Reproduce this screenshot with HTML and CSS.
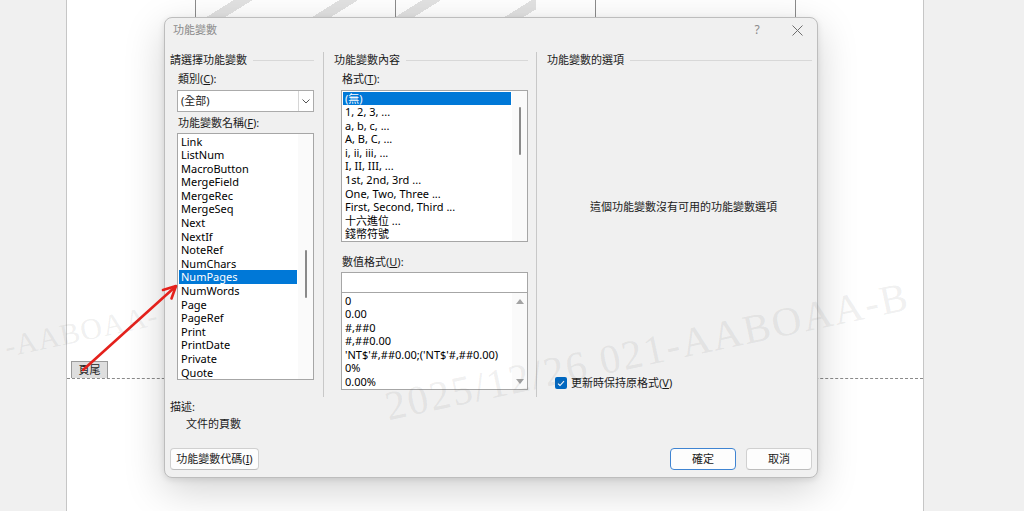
FILE: index.html
```html
<!DOCTYPE html>
<html lang="zh-Hant">
<head>
<meta charset="utf-8">
<title>功能變數</title>
<link rel="stylesheet" href="styles.css">
</head>
<body>
<div class="desk">
  <div class="gutter"></div>
  <div class="page">
    <div class="hdr-table">
      <div class="cell stripes"></div>
      <div class="cell stripes stripes-b"></div>
      <div class="cell"></div>
    </div>
    <div class="footer-zone">
      <span class="footer-tag">頁尾</span>
    </div>
  </div>
  <div class="gutter gutter-r"></div>
</div>

<div class="dialog">
  <div class="titlebar">
    <span class="title">功能變數</span>
    <span class="tb-btn help">?</span>
    <span class="tb-btn close">
      <svg width="11" height="11" viewBox="0 0 11 11"><path d="M0.5 0.5 L10.5 10.5 M10.5 0.5 L0.5 10.5" stroke="#6e6e6e" stroke-width="1" fill="none"/></svg>
    </span>
  </div>

  <div class="main">
    <div class="col col1">
      <div class="group-title">請選擇功能變數</div>
      <div class="label">類別(<u>C</u>):</div>
      <div class="combo">
        <span class="combo-text">(全部)</span>
        <span class="combo-btn">
          <svg width="8" height="5" viewBox="0 0 8 5"><path d="M0.5 0.5 L4 4 L7.5 0.5" stroke="#555" stroke-width="1" fill="none"/></svg>
        </span>
      </div>
      <div class="label label-names">功能變數名稱(<u>F</u>):</div>
      <div class="listbox names">
        <div class="items">
          <div class="item">Link</div>
          <div class="item">ListNum</div>
          <div class="item">MacroButton</div>
          <div class="item">MergeField</div>
          <div class="item">MergeRec</div>
          <div class="item">MergeSeq</div>
          <div class="item">Next</div>
          <div class="item">NextIf</div>
          <div class="item">NoteRef</div>
          <div class="item">NumChars</div>
          <div class="item sel">NumPages</div>
          <div class="item">NumWords</div>
          <div class="item">Page</div>
          <div class="item">PageRef</div>
          <div class="item">Print</div>
          <div class="item">PrintDate</div>
          <div class="item">Private</div>
          <div class="item">Quote</div>
        </div>
        <div class="vscroll"><div class="thumb thumb-names"></div></div>
      </div>
    </div>
    <div class="sep"></div>
    <div class="col col2">
      <div class="group-title">功能變數內容</div>
      <div class="label">格式(<u>T</u>):</div>
      <div class="listbox formats">
        <div class="items">
          <div class="item sel">(無)</div>
          <div class="item">1, 2, 3, ...</div>
          <div class="item">a, b, c, ...</div>
          <div class="item">A, B, C, ...</div>
          <div class="item">i, ii, iii, ...</div>
          <div class="item">I, II, III, ...</div>
          <div class="item">1st, 2nd, 3rd ...</div>
          <div class="item">One, Two, Three ...</div>
          <div class="item">First, Second, Third ...</div>
          <div class="item">十六進位 ...</div>
          <div class="item">錢幣符號</div>
        </div>
        <div class="vscroll"><div class="thumb thumb-formats"></div></div>
      </div>
      <div class="label label-num">數值格式(<u>U</u>):</div>
      <div class="textbox"></div>
      <div class="listbox numbers">
        <div class="items">
          <div class="item">0</div>
          <div class="item">0.00</div>
          <div class="item">#,##0</div>
          <div class="item">#,##0.00</div>
          <div class="item">'NT$'#,##0.00;('NT$'#,##0.00)</div>
          <div class="item">0%</div>
          <div class="item">0.00%</div>
        </div>
        <div class="vscroll arrows">
          <span class="arr up"></span>
          <span class="arr down"></span>
        </div>
      </div>
    </div>
    <div class="sep"></div>
    <div class="col col3">
      <div class="group-title">功能變數的選項</div>
      <div class="no-options">這個功能變數沒有可用的功能變數選項</div>
      <div class="check-row">
        <span class="checkbox">
          <svg width="8" height="7" viewBox="0 0 8 7"><path d="M1 3.6 L3 5.5 L7 1.2" stroke="#fff" stroke-width="1.1" fill="none"/></svg>
        </span>
        <span>更新時保持原格式(<u>V</u>)</span>
      </div>
    </div>
  </div>

  <div class="bottom">
    <div class="desc-label">描述:</div>
    <div class="desc-text">文件的頁數</div>
    <div class="buttons">
      <span class="btn btn-codes">功能變數代碼(<u>I</u>)</span>
      <span class="btn btn-ok">確定</span>
      <span class="btn btn-cancel">取消</span>
    </div>
  </div>
</div>

<svg class="arrow" width="1024" height="511" viewBox="0 0 1024 511">
  <g stroke="#e4211c" stroke-width="2.6" stroke-linecap="round" stroke-linejoin="round" fill="none">
    <path d="M83 370 L175 287"/>
    <path d="M163 290 L176 286 L171.5 298.5"/>
  </g>
</svg>

<div class="watermark wm1">2025/12/26 021-AABOAA-B</div>
<div class="watermark wm2">-AABOAA-</div>
</body>
</html>
```

FILE: styles.css
```css
html, body {
  margin: 0;
  padding: 0;
}
body {
  width: 1024px;
  height: 511px;
  overflow: hidden;
  position: relative;
  background: #f0f0f0;
  font-family: "Noto Sans", "Noto Sans CJK TC", sans-serif;
}

/* ---------- document background ---------- */
.desk {
  display: flex;
  height: 511px;
}
.gutter {
  width: 66px;
  background: #f0f0f0;
}
.gutter-r {
  width: 100px;
}
.page {
  flex: 1;
  background: #fff;
  border-left: 1px solid #c6c6c6;
  border-right: 1px solid #c6c6c6;
  display: flex;
  flex-direction: column;
}
.hdr-table {
  display: flex;
  margin-left: 128px;
  height: 40px;
}
.cell {
  width: 199px;
  border-left: 1px solid #8c8c8c;
}
.cell:last-child {
  border-right: 1px solid #8c8c8c;
}
.stripes {
  background: repeating-linear-gradient(148deg, transparent 0 20px, #e2e2e2 20px 30px, transparent 30px 56px);
}
.stripes-b {
  background: linear-gradient(90deg, transparent 0 140px, #fff 140px),
              repeating-linear-gradient(148deg, transparent 0 14px, #e2e2e2 14px 24px, transparent 24px 58px);
}
.footer-zone {
  margin-top: 321px;
  height: 17px;
  border-bottom: 1px dashed #8a8a8a;
  display: flex;
  align-items: flex-end;
}
.footer-tag {
  margin-left: 4px;
  width: 37px;
  height: 17px;
  box-sizing: border-box;
  border: 1px solid #9a9a9a;
  border-bottom: none;
  background: #dedede;
  font-size: 11px;
  line-height: 16px;
  text-align: center;
  color: #222;
}

/* ---------- dialog ---------- */
.dialog {
  position: absolute;
  left: 164px;
  top: 17px;
  width: 654px;
  height: 461px;
  box-sizing: border-box;
  background: #f0f0f0;
  border: 1px solid #bdbdbd;
  border-radius: 8px;
  box-shadow: 0 12px 40px rgba(0, 0, 0, 0.18), 0 2px 6px rgba(0, 0, 0, 0.10);
  font-size: 11px;
  line-height: 14px;
  color: #1a1a1a;
  display: flex;
  flex-direction: column;
}
.dialog u {
  text-decoration-thickness: 1px;
  text-underline-offset: 1px;
}
.titlebar {
  height: 24px;
  display: flex;
  align-items: center;
  padding-left: 8px;
}
.title {
  color: #8a8a8a;
  font-size: 11px;
}
.tb-btn {
  width: 40px;
  height: 24px;
  display: flex;
  align-items: center;
  justify-content: center;
  color: #8a8a8a;
}
.help {
  margin-left: auto;
  font-size: 12px;
}

.main {
  display: flex;
  height: 345px;
  margin-top: 10px;
}
.col {
  box-sizing: border-box;
  display: flex;
  flex-direction: column;
}
.col1 {
  width: 158px;
  padding: 0 9px 0 5px;
}
.col2 {
  width: 212px;
  padding: 0 8px 0 10px;
}
.col3 {
  flex: 1;
  padding: 0 5px 0 10px;
}
.sep {
  width: 1px;
  background: #c8c8c8;
}
.group-title {
  display: flex;
  align-items: center;
  gap: 6px;
  height: 14px;
  margin-top: 1px;
  white-space: nowrap;
}
.group-title::after {
  content: "";
  flex: 1;
  border-top: 1px solid #d8d8d8;
}
.label {
  margin: 5px 0 0 8px;
  height: 14px;
}
.label-names {
  margin-top: 4px;
}
.combo {
  margin: 4px 0 0 7px;
  height: 22px;
  box-sizing: border-box;
  border: 1px solid #ababab;
  background: #fff;
  display: flex;
  align-items: center;
}
.combo-text {
  padding-left: 3px;
}
.combo-btn {
  margin-left: auto;
  width: 14px;
  height: 100%;
  border-left: 1px solid #d6d6d6;
  display: flex;
  align-items: center;
  justify-content: center;
}

.listbox {
  margin-left: 7px;
  box-sizing: border-box;
  border: 1px solid #a6a6a6;
  background: #fff;
  display: flex;
  color: #000;
}
.listbox.names {
  margin-top: 3px;
  height: 247px;
}
.listbox.formats {
  margin-top: 4px;
  height: 152px;
}
.listbox.numbers {
  margin-top: -1px;
  height: 98px;
}
.items {
  flex: 1;
  min-width: 0;
  padding-top: 0.5px;
  overflow: hidden;
}
.item {
  height: 13.6px;
  line-height: 13.6px;
  margin: 0 1px;
  padding-left: 2px;
  white-space: nowrap;
}
.item.sel {
  background: #0078d7;
  color: #fff;
}
.vscroll {
  width: 15px;
  background: #fafafa;
  display: flex;
  flex-direction: column;
  align-items: center;
}
.thumb {
  width: 2px;
  background: #8a8a8a;
  border-radius: 1px;
}
.thumb-names {
  margin-top: 116px;
  height: 48px;
}
.thumb-formats {
  margin-top: 16px;
  height: 48px;
}
.arrows {
  justify-content: space-between;
  padding: 6px 0 5px;
  box-sizing: border-box;
}
.arr {
  width: 0;
  height: 0;
  border-left: 4px solid transparent;
  border-right: 4px solid transparent;
}
.arr.up {
  border-bottom: 5px solid #a3a3a3;
}
.arr.down {
  border-top: 5px solid #a3a3a3;
}
.label-num {
  margin-top: 13px;
}
.textbox {
  margin: 3px 0 0 7px;
  height: 21px;
  box-sizing: border-box;
  border: 1px solid #a6a6a6;
  background: #fff;
}

.no-options {
  margin-top: 133px;
  text-align: center;
  padding-left: 8px;
}
.check-row {
  margin-top: 162px;
  padding-left: 8px;
  display: flex;
  align-items: center;
  gap: 4px;
  height: 14px;
}
.checkbox {
  width: 12px;
  height: 12px;
  box-sizing: border-box;
  border-radius: 2px;
  background: #0067c0;
  display: flex;
  align-items: center;
  justify-content: center;
}

.bottom {
  padding: 0 5px;
  display: flex;
  flex-direction: column;
}
.desc-label {
  margin-top: 3px;
  height: 14px;
}
.desc-text {
  margin: 3px 0 0 16px;
  height: 14px;
}
.buttons {
  margin-top: 17px;
  display: flex;
  gap: 10px;
}
.btn {
  height: 22px;
  box-sizing: border-box;
  border: 1px solid #d0d0d0;
  border-bottom-color: #bdbdbd;
  border-radius: 4px;
  background: #fdfdfd;
  display: flex;
  align-items: center;
  justify-content: center;
}
.btn-codes {
  width: 89px;
}
.btn-ok {
  margin-left: auto;
  width: 66px;
  border-color: #3f84d2;
}
.btn-cancel {
  width: 66px;
}

/* ---------- overlays ---------- */
.arrow {
  position: absolute;
  left: 0;
  top: 0;
  pointer-events: none;
}
.watermark {
  position: absolute;
  font-family: "Liberation Serif", serif;
  font-size: 41px;
  line-height: 1;
  letter-spacing: 2px;
  white-space: nowrap;
  color: rgba(110, 110, 110, 0.11);
  transform-origin: 0 100%;
  transform: rotate(-12deg);
  pointer-events: none;
}
.wm1 {
  left: 390px;
  top: 386px;
}
.wm2 {
  left: 8px;
  top: 332px;
  font-size: 30px;
  letter-spacing: 1px;
}
```
